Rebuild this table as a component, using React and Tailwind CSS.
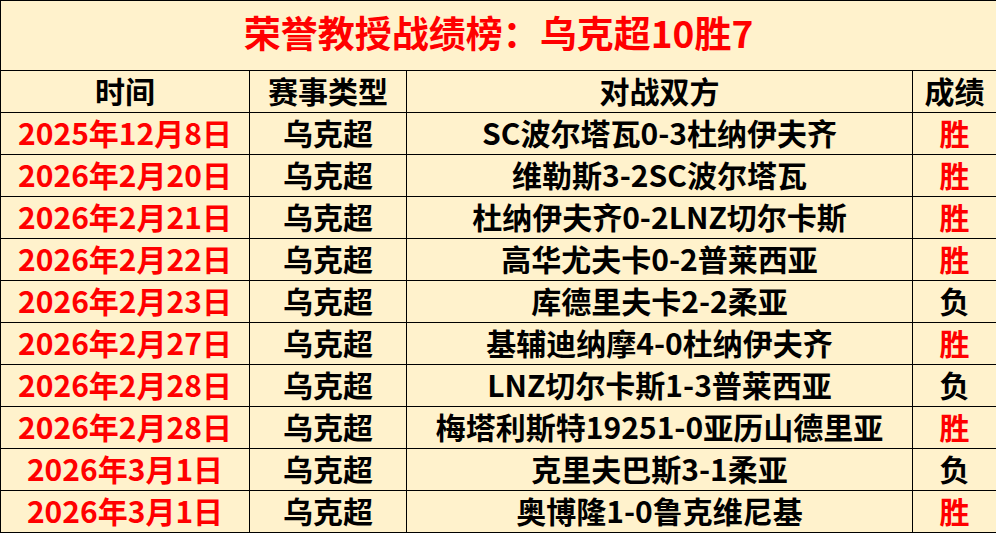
const rows = [
  ["2025年12月8日", "SC波尔塔瓦0-3杜纳伊夫齐", "胜"],
  ["2026年2月20日", "维勒斯3-2SC波尔塔瓦", "胜"],
  ["2026年2月21日", "杜纳伊夫齐0-2LNZ切尔卡斯", "胜"],
  ["2026年2月22日", "高华尤夫卡0-2普莱西亚", "胜"],
  ["2026年2月23日", "库德里夫卡2-2柔亚", "负"],
  ["2026年2月27日", "基辅迪纳摩4-0杜纳伊夫齐", "胜"],
  ["2026年2月28日", "LNZ切尔卡斯1-3普莱西亚", "负"],
  ["2026年2月28日", "梅塔利斯特19251-0亚历山德里亚", "胜"],
  ["2026年3月1日", "克里夫巴斯3-1柔亚", "负"],
  ["2026年3月1日", "奥博隆1-0鲁克维尼基", "胜"],
];

const cell = "border border-black text-center align-middle p-0 pb-[3px] leading-none";

export default function App() {
  return (
    <div
      className="w-[996px] h-[533px] bg-[#fff2cc] overflow-hidden"
      style={{ fontFamily: '"Noto Sans CJK SC", "Noto Sans", sans-serif' }}
    >
      <table className="table-fixed border-collapse w-[996px] font-bold text-[30px]">
        <colgroup>
          <col className="w-[249px]" />
          <col className="w-[157px]" />
          <col className="w-[506px]" />
          <col className="w-[84px]" />
        </colgroup>
        <tbody>
          <tr className="h-[70px]">
            <td
              colSpan={4}
              className="border border-black text-center align-middle p-0 pb-[6px] leading-none text-[37px] text-[#ff0000]"
            >
              荣誉教授战绩榜：乌克超10胜7
            </td>
          </tr>
          <tr className="h-[42px]">
            <td className={cell}>时间</td>
            <td className={cell}>赛事类型</td>
            <td className={cell}>对战双方</td>
            <td className={cell}>成绩</td>
          </tr>
          {rows.map((r, i) => (
            <tr key={i} className="h-[42px]">
              <td className={`${cell} text-[#ff0000]`}>{r[0]}</td>
              <td className={cell}>乌克超</td>
              <td className={cell}>{r[1]}</td>
              <td className={`${cell} ${r[2] === "胜" ? "text-[#ff0000]" : "text-black"}`}>
                {r[2]}
              </td>
            </tr>
          ))}
        </tbody>
      </table>
    </div>
  );
}
